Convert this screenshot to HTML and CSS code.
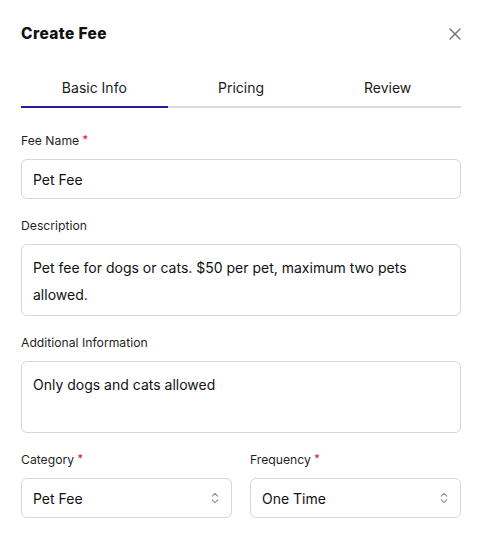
FILE: index.html
```html
<!DOCTYPE html>
<html lang="en">
<head>
<meta charset="utf-8">
<title>Create Fee</title>
<link rel="stylesheet" href="styles.css">
</head>
<body>
<div class="modal">
  <div class="header">
    <h1 class="title">Create Fee</h1>
    <button class="close" aria-label="Close">
      <svg width="12" height="12" viewBox="0 0 12 12"><path d="M1 1L11 11M11 1L1 11" stroke="#6b7280" stroke-width="1.4" stroke-linecap="round"/></svg>
    </button>
  </div>
  <div class="tabs">
    <div class="tab active">Basic Info</div>
    <div class="tab">Pricing</div>
    <div class="tab">Review</div>
  </div>
  <div class="field">
    <label class="label">Fee Name <span class="req">*</span></label>
    <div class="input">Pet Fee</div>
  </div>
  <div class="field">
    <label class="label">Description</label>
    <div class="input area">Pet fee for dogs or cats. $50 per pet, maximum two pets allowed.</div>
  </div>
  <div class="field">
    <label class="label">Additional Information</label>
    <div class="input area">Only dogs and cats allowed</div>
  </div>
  <div class="row">
    <div class="field">
      <label class="label">Category <span class="req">*</span></label>
      <div class="input select">Pet Fee
        <svg class="caret" width="8" height="12" viewBox="0 0 8 12"><path d="M1.2 4.2L4 1.4L6.8 4.2M1.2 7.8L4 10.6L6.8 7.8" fill="none" stroke="#8a8f98" stroke-width="1.1" stroke-linecap="round" stroke-linejoin="round"/></svg>
      </div>
    </div>
    <div class="field">
      <label class="label">Frequency <span class="req">*</span></label>
      <div class="input select">One Time
        <svg class="caret" width="8" height="12" viewBox="0 0 8 12"><path d="M1.2 4.2L4 1.4L6.8 4.2M1.2 7.8L4 10.6L6.8 7.8" fill="none" stroke="#8a8f98" stroke-width="1.1" stroke-linecap="round" stroke-linejoin="round"/></svg>
      </div>
    </div>
  </div>
</div>
</body>
</html>
```
FILE: styles.css
```css
* { box-sizing: border-box; }
html, body { margin: 0; padding: 0; background: #fff; }
body { font-family: Inter, "Noto Sans", sans-serif; color: #111; }
.modal { padding: 22px 21px 0 21px; }
.header { display: flex; align-items: center; justify-content: space-between; height: 24px; }
.title { margin: 0; font-size: 15.5px; font-weight: 800; letter-spacing: 0.4px; color: #111; line-height: 24px; }
.close { border: 0; background: none; padding: 0; margin-right: 0; width: 12px; height: 12px; display: flex; }
.tabs { display: grid; grid-template-columns: 1fr 1fr 1fr; margin-top: 32px; border-bottom: 2px solid #d9dbe0; }
.tab { text-align: center; font-size: 14px; line-height: 20px; padding-bottom: 8px; color: #1a1a1a; position: relative; }
.tab.active::after { content: ""; position: absolute; left: 0; right: 0; bottom: -2px; height: 2px; background: #2b1a91; }
.field { display: flex; flex-direction: column; margin-top: 22px; }
.field + .field { margin-top: 18px; }
.label { font-size: 12.2px; line-height: 18px; color: #1f1f1f; margin-bottom: 9px; }
.req { color: #c8102e; font-size: 11px; vertical-align: 2px; }
.input { border: 1px solid #d6d6d6; border-radius: 6px; height: 40px; padding: 0 11px; font-size: 14px; display: flex; align-items: center; color: #111; }
.area { height: 72px; padding-top: 9px; line-height: 27px; display: block; }
.row { display: grid; grid-template-columns: 1fr 1fr; column-gap: 18px; margin-top: 16px; }
.row .field { margin-top: 0; }
.select { justify-content: space-between; padding-right: 12px; }
.caret { flex: none; }
```
